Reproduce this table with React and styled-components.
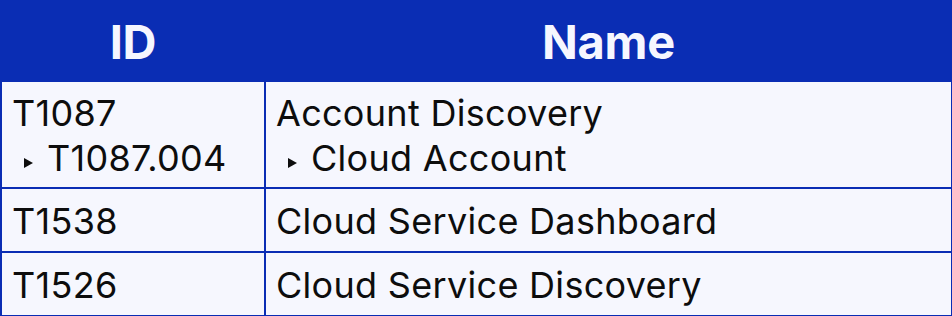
import styled, { createGlobalStyle } from "styled-components";

const GlobalStyle = createGlobalStyle`
  html, body {
    margin: 0;
    padding: 0;
    background: #ffffff;
  }
`;

const Table = styled.div`
  width: 952px;
  box-sizing: border-box;
  display: grid;
  grid-template-columns: 262px 1fr;
  grid-template-rows: 80px 105px 62px 62px;
  gap: 2px;
  padding: 0 1px 1px 2px;
  background-color: #0a2db4;
  font-family: Inter, "Liberation Sans", sans-serif;
`;

const HeadCell = styled.div`
  display: flex;
  align-items: center;
  justify-content: center;
  padding-top: 2px;
  background-color: #0a2db4;
  color: #f6f7ff;
  font-size: 47px;
  font-weight: 700;
  letter-spacing: -0.3px;
`;

const Cell = styled.div`
  display: flex;
  flex-direction: column;
  justify-content: center;
  padding: 3px 10px 0 10px;
  background-color: #f6f7fe;
  color: #0d0d0d;
  font-size: 36px;
  line-height: 45px;
  letter-spacing: 0.3px;
`;

const Line = styled.div`
  display: flex;
  align-items: center;
`;

const Sub = styled(Line)`
  padding-left: 12px;
`;

const Arrow = styled.span`
  display: inline-block;
  width: 0;
  height: 0;
  margin: 8px 14px 0 0;
  border-left: 9px solid #0d0d0d;
  border-top: 5px solid transparent;
  border-bottom: 5px solid transparent;
`;

const rows = [
  {
    id: "T1087",
    name: "Account Discovery",
    sub: { id: "T1087.004", name: "Cloud Account" },
  },
  { id: "T1538", name: "Cloud Service Dashboard" },
  { id: "T1526", name: "Cloud Service Discovery" },
];

const App = () => {
  return (
    <>
      <GlobalStyle />
      <Table>
        <HeadCell>ID</HeadCell>
        <HeadCell>Name</HeadCell>
        {rows.map((row) => [
          <Cell key={row.id + "-id"}>
            <Line>{row.id}</Line>
            {row.sub && (
              <Sub>
                <Arrow />
                {row.sub.id}
              </Sub>
            )}
          </Cell>,
          <Cell key={row.id + "-name"}>
            <Line>{row.name}</Line>
            {row.sub && (
              <Sub>
                <Arrow />
                {row.sub.name}
              </Sub>
            )}
          </Cell>,
        ])}
      </Table>
    </>
  );
};

export default App;
